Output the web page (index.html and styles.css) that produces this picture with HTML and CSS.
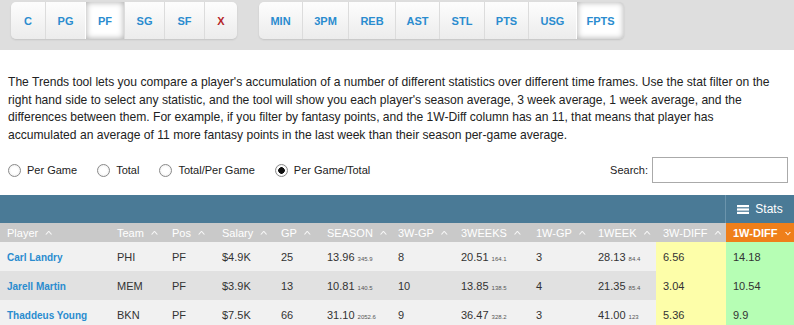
FILE: index.html
```html
<!DOCTYPE html>
<html lang="en">
<head>
  <meta charset="UTF-8">
  <title>Trends</title>
  <link rel="stylesheet" href="styles.css">
</head>
<body>
  <div class="toolbar">
    <div class="btn-group">
      <button class="w-c">C</button>
      <button class="w-pg">PG</button>
      <button class="w-pf active">PF</button>
      <button class="w-sg">SG</button>
      <button class="w-sf">SF</button>
      <button class="w-x clear">X</button>
    </div>
    <div class="btn-group">
      <button class="w-min">MIN</button>
      <button class="w-3pm">3PM</button>
      <button class="w-reb">REB</button>
      <button class="w-ast">AST</button>
      <button class="w-stl">STL</button>
      <button class="w-pts">PTS</button>
      <button class="w-usg">USG</button>
      <button class="w-fpts active">FPTS</button>
    </div>
  </div>

  <p class="intro">The Trends tool lets you compare a player's accumulation of a number of different statistics over different time frames. Use the stat filter on the<br>right hand side to select any statistic, and the tool will show you each player's season average, 3 week average, 1 week average, and the<br>differences between them. For example, if you filter by fantasy points, and the 1W-Diff column has an 11, that means that player has<br>accumulated an average of 11 more fantasy points in the last week than their season per-game average.</p>

  <div class="options">
    <div class="modes">
      <label><input type="radio" name="mode"> Per Game</label>
      <label><input type="radio" name="mode"> Total</label>
      <label><input type="radio" name="mode"> Total/Per Game</label>
      <label><input type="radio" name="mode" checked> Per Game/Total</label>
    </div>
    <label class="search">Search: <input type="text"></label>
  </div>

  <div class="table-top">
    <div class="stats-toggle">
      <svg width="12" height="9" viewBox="0 0 12 9"><rect x="0" y="0" width="12" height="2.2" fill="#fff"/><rect x="0" y="3.4" width="12" height="2.2" fill="#fff"/><rect x="0" y="6.8" width="12" height="2.2" fill="#fff"/></svg>
      Stats
    </div>
  </div>
  <table class="trends">
    <colgroup>
      <col style="width:110px"><col style="width:55px"><col style="width:50px"><col style="width:59px">
      <col style="width:46px"><col style="width:71px"><col style="width:63px"><col style="width:75px">
      <col style="width:62px"><col style="width:65px"><col style="width:70px"><col style="width:68px">
    </colgroup>
    <thead>
      <tr>
        <th>Player <span class="up"></span></th>
        <th>Team <span class="up"></span></th>
        <th>Pos <span class="up"></span></th>
        <th>Salary <span class="up"></span></th>
        <th>GP <span class="up"></span></th>
        <th>SEASON <span class="up"></span></th>
        <th>3W-GP <span class="up"></span></th>
        <th>3WEEKS <span class="up"></span></th>
        <th>1W-GP <span class="up"></span></th>
        <th>1WEEK <span class="up"></span></th>
        <th>3W-DIFF <span class="up"></span></th>
        <th class="sorted">1W-DIFF <span class="down"></span></th>
      </tr>
    </thead>
    <tbody>
      <tr>
        <td><a href="#">Carl Landry</a></td><td>PHI</td><td>PF</td><td>$4.9K</td><td>25</td>
        <td>13.96 <small>345.9</small></td><td>8</td><td>20.51 <small>164.1</small></td><td>3</td>
        <td>28.13 <small>84.4</small></td><td class="diff3">6.56</td><td class="diff1">14.18</td>
      </tr>
      <tr>
        <td><a href="#">Jarell Martin</a></td><td>MEM</td><td>PF</td><td>$3.9K</td><td>13</td>
        <td>10.81 <small>140.5</small></td><td>10</td><td>13.85 <small>138.5</small></td><td>4</td>
        <td>21.35 <small>85.4</small></td><td class="diff3">3.04</td><td class="diff1">10.54</td>
      </tr>
      <tr>
        <td><a href="#">Thaddeus Young</a></td><td>BKN</td><td>PF</td><td>$7.5K</td><td>66</td>
        <td>31.10 <small>2052.6</small></td><td>9</td><td>36.47 <small>328.2</small></td><td>3</td>
        <td>41.00 <small>123</small></td><td class="diff3">5.36</td><td class="diff1">9.9</td>
      </tr>
    </tbody>
  </table>
</body>
</html>
```

FILE: styles.css
```css
body {
  margin: 0;
  background: #fff;
  font-family: "Liberation Sans", Arial, sans-serif;
  color: #333;
}
.toolbar {
  background: #dedede;
  height: 50px;
  padding: 2px 11px 0;
  box-sizing: border-box;
  display: flex;
  gap: 22px;
  align-items: flex-start;
}
.btn-group {
  display: flex;
  height: 37px;
  border-radius: 5px;
  overflow: hidden;
  box-shadow: 0 1px 2px rgba(0, 0, 0, 0.12);
}
.btn-group button {
  height: 37px;
  padding: 0;
  border: none;
  border-left: 1px solid #dcdcdc;
  background: linear-gradient(#fdfdfd, #ececec);
  color: #2a8ccf;
  font-family: "Liberation Sans", Arial, sans-serif;
  font-size: 11px;
  font-weight: bold;
  cursor: pointer;
}
.btn-group button:first-child {
  border-left: none;
}
.btn-group button.active {
  background: #fff;
  box-shadow: inset 0 0 6px rgba(0, 0, 0, 0.35);
  border-left-color: transparent;
}
.btn-group button.clear {
  color: #b5262a;
}
.w-c { width: 34px; }
.w-pg { width: 40px; }
.w-pf { width: 39px; }
.w-sg { width: 40px; }
.w-sf { width: 40px; }
.w-x { width: 33px; }
.w-min { width: 43px; }
.w-3pm { width: 46px; }
.w-reb { width: 47px; }
.w-ast { width: 44px; }
.w-stl { width: 45px; }
.w-pts { width: 44px; }
.w-usg { width: 48px; }
.w-fpts { width: 48px; }

.intro {
  margin: 24px 8px 0;
  font-size: 12.1px;
  line-height: 17.5px;
  color: #222;
  white-space: nowrap;
}
.options {
  display: flex;
  justify-content: space-between;
  align-items: center;
  margin-top: 13px;
  padding: 0 6px 0 8px;
  height: 26px;
  font-size: 11px;
  color: #222;
}
.modes {
  display: flex;
  gap: 20px;
}
.modes label {
  display: flex;
  align-items: center;
  gap: 6px;
}
.modes input {
  appearance: none;
  -webkit-appearance: none;
  width: 13px;
  height: 13px;
  margin: 0;
  border: 1px solid #8a8a8a;
  border-radius: 50%;
  background: radial-gradient(circle, #fff 40%, #e8e8e8 100%);
}
.modes input:checked {
  background: radial-gradient(circle, #111 0, #111 3px, #fff 3.6px, #fff 50%, #e8e8e8 100%);
}
.search {
  display: flex;
  align-items: center;
  gap: 4px;
}
.search input {
  width: 136px;
  height: 26px;
  box-sizing: border-box;
  border: 1px solid #aaa;
  margin: 0;
}
.table-top {
  margin-top: 12px;
  height: 28px;
  background: #4a7a96;
  display: flex;
  justify-content: flex-end;
}
.stats-toggle {
  width: 68px;
  border-left: 1px solid #6b94ac;
  display: flex;
  align-items: center;
  justify-content: center;
  gap: 6px;
  color: #fff;
  font-size: 12px;
}
.trends {
  width: 794px;
  table-layout: fixed;
  border-collapse: collapse;
  font-size: 11px;
}
.trends th {
  background: #c9c9c9;
  color: #fff;
  font-weight: normal;
  text-align: left;
  height: 19px;
  padding: 0 0 0 7px;
  white-space: nowrap;
}
.trends th.sorted {
  background: #ef7f1a;
  font-weight: bold;
}
.up, .down {
  display: inline-block;
  width: 7px;
  height: 4px;
  margin-left: 4px;
  vertical-align: 2px;
  background: currentColor;
  opacity: 0.85;
  clip-path: polygon(0 100%, 50% 0, 100% 100%, 80% 100%, 50% 40%, 20% 100%);
}
.down {
  clip-path: polygon(0 0, 50% 100%, 100% 0, 80% 0, 50% 60%, 20% 0);
  vertical-align: 1px;
}
.trends td {
  height: 29px;
  padding: 0 0 0 7px;
  color: #333;
  white-space: nowrap;
}
.trends tbody tr:nth-child(odd) td {
  background: #f1f1f1;
}
.trends tbody tr:nth-child(even) td {
  background: #e1e1e1;
}
.trends tbody tr td.diff3 {
  background: #fdfea9;
}
.trends tbody tr td.diff1 {
  background: #b6feb4;
}
.trends a {
  color: #2a8ccf;
  font-weight: bold;
  font-size: 10px;
  text-decoration: none;
}
.trends small {
  font-size: 6px;
  color: #555;
}
```
